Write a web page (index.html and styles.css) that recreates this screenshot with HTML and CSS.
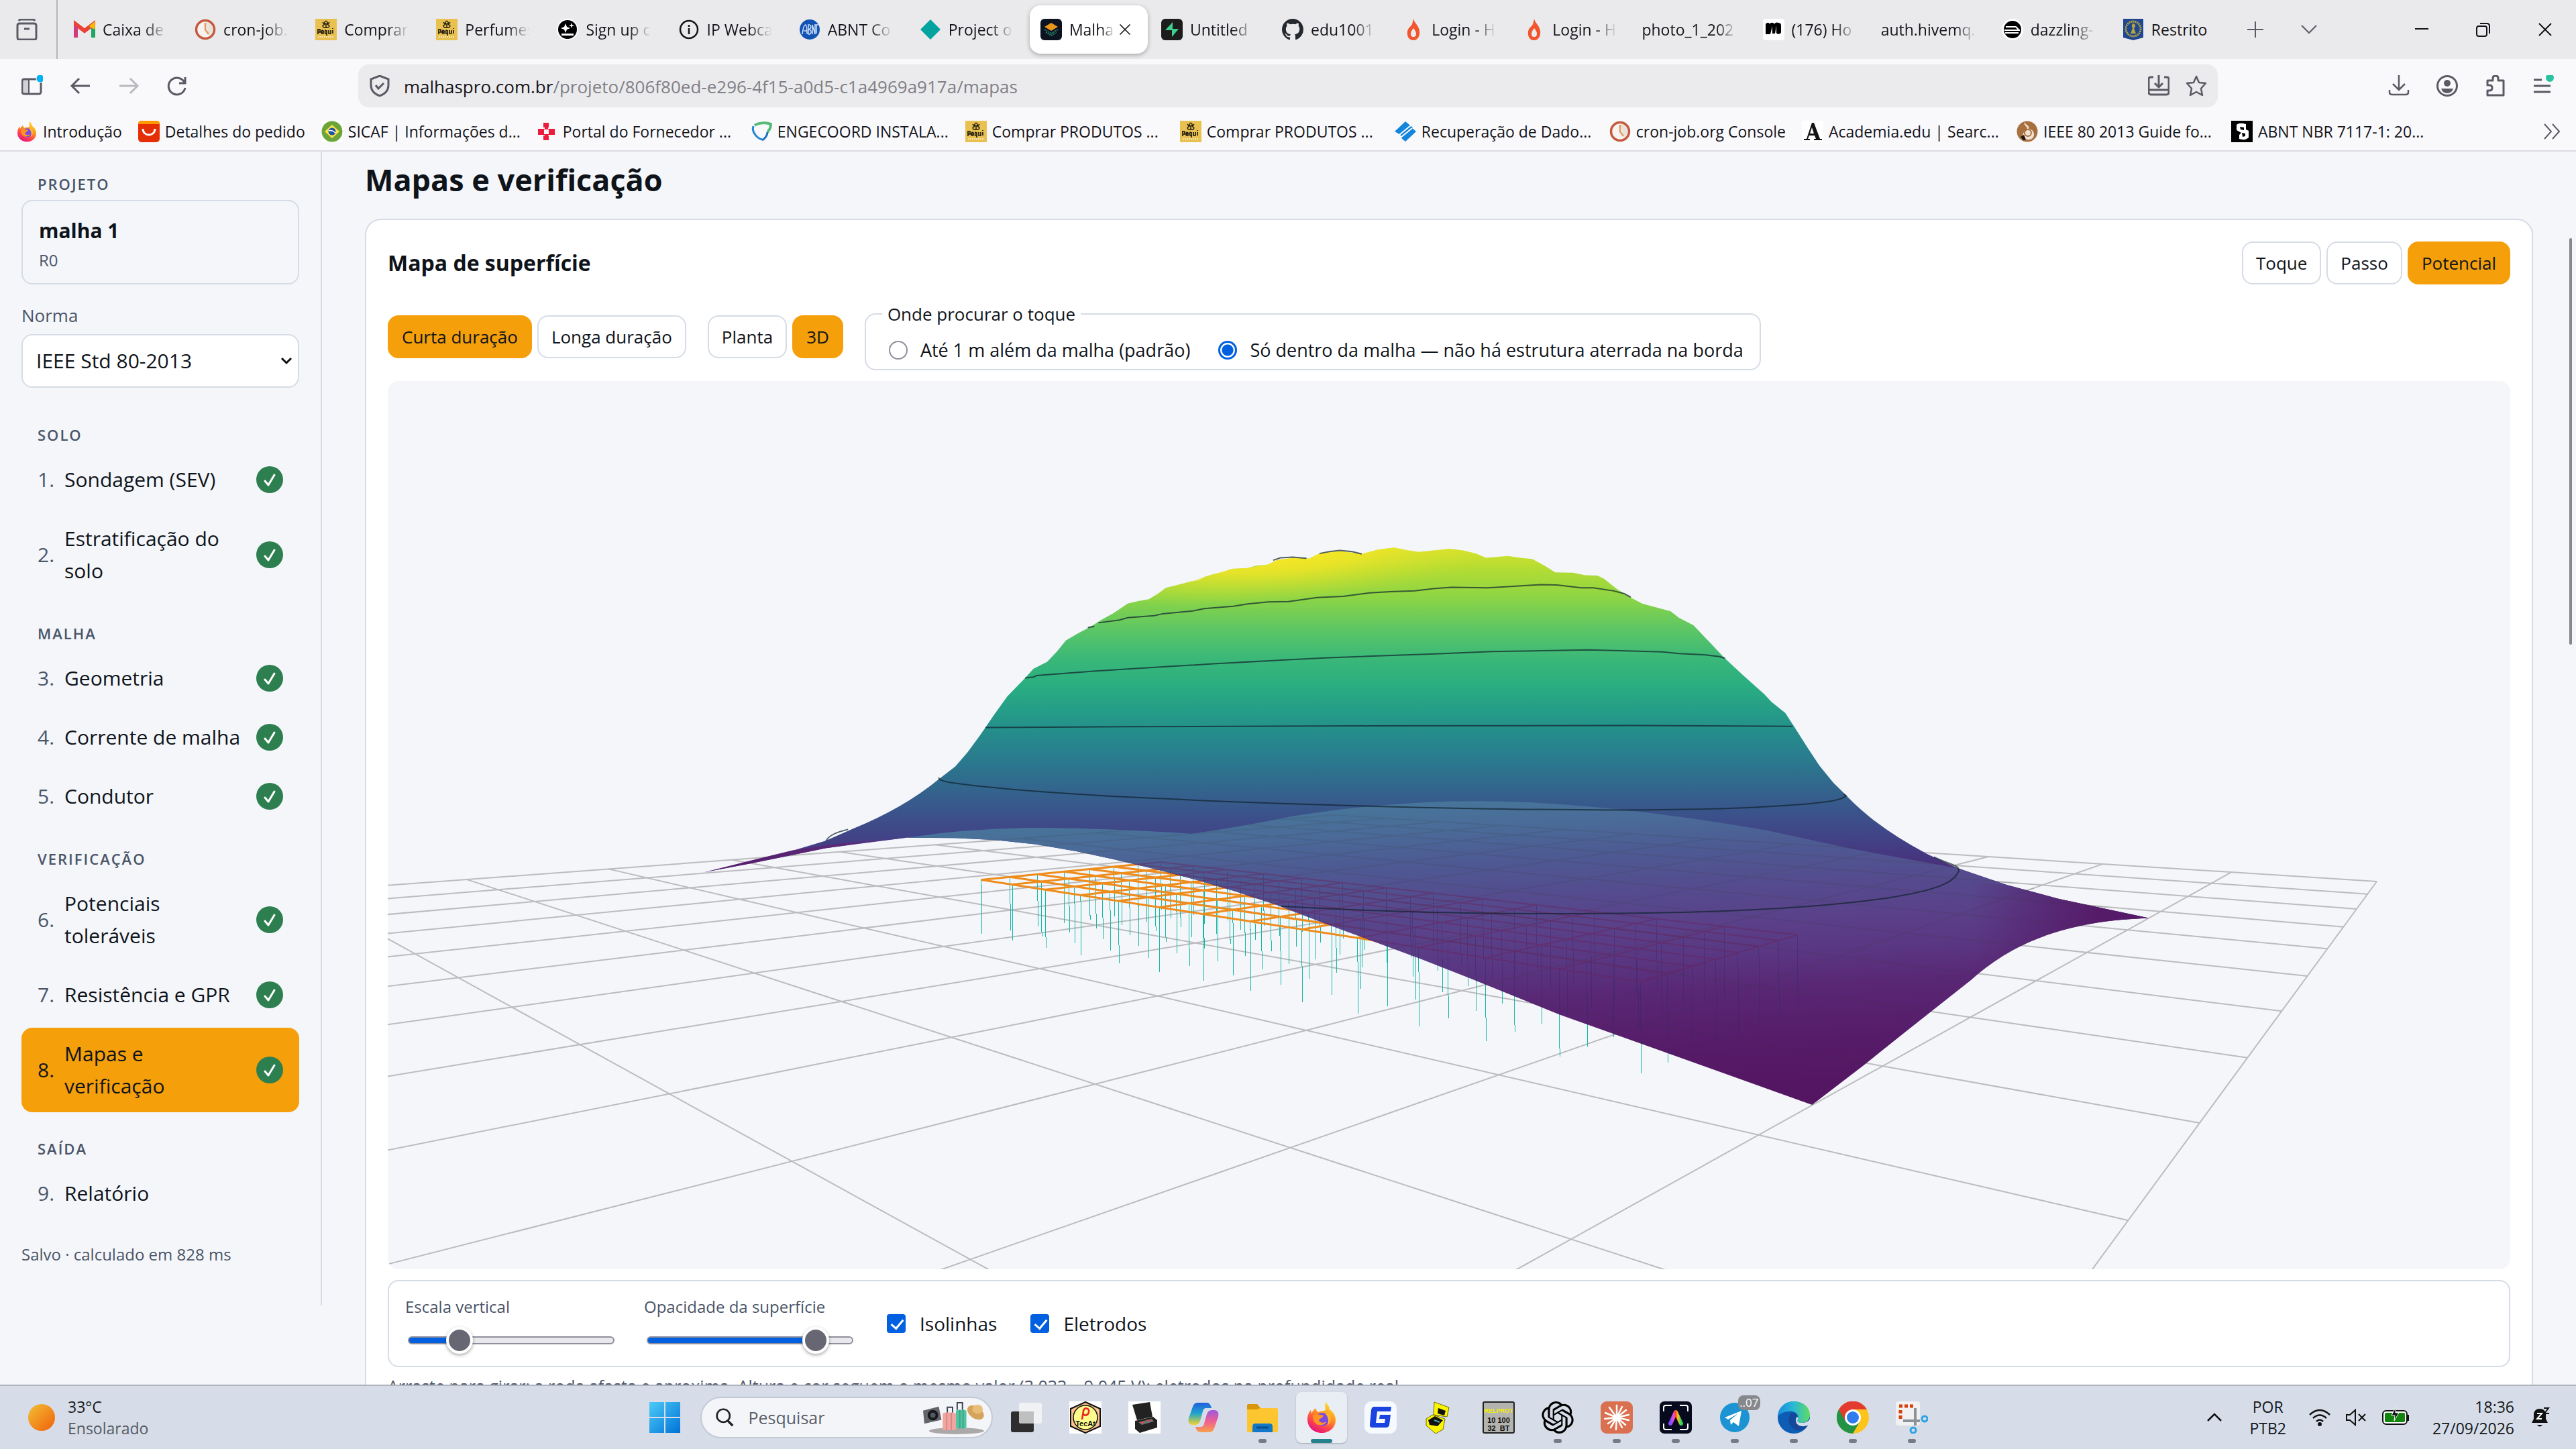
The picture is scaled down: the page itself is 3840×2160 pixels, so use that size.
FILE: index.html
```html
<!DOCTYPE html>
<html lang="pt-BR">
<head>
<meta charset="utf-8">
<title>Malhas Pro</title>
<link rel="stylesheet" href="styles.css">
</head>
<body>
<svg class="defs" aria-hidden="true">
  <symbol id="i-pequi" viewBox="0 0 32 32"><rect width="32" height="32" fill="#e9c150"/><path d="M16 3c-3 2-3 4 0 5 3-1 3-3 0-5M11 5l3 4M21 5l-3 4M13 9c-3 1-2 4 1 4h4c3 0 4-3 1-4M16 8v5" fill="none" stroke="#211c10" stroke-width="1.500"/><path d="M4 15v8M4 16h3v4H4M9 20c0-4 4-3 3 0H9c0 3 3 2 4 1M16 17c-2 0-2 5 0 5h1v-5 8M20 17v5h3v-5M26 17v5M26 14v1" fill="none" stroke="#211c10" stroke-width="1.700"/><path d="M4 27h24" stroke="#f7e7b4" stroke-width="2" stroke-dasharray="2 1"/></symbol>
  <symbol id="i-clock" viewBox="0 0 32 32"><circle cx="16" cy="16" r="13.500" fill="#f6f3f1" stroke="#c4593c" stroke-width="3.500"/><path d="M16 4a12 12 0 0 1 6 22z" fill="#e3d8cf" opacity=".6"/><path d="M16 6v10l5 7" fill="none" stroke="#e69a60" stroke-width="2.500"/></symbol>
  <symbol id="i-flame" viewBox="0 0 32 32"><path d="M16 0c1 6 8 10 9 18 1 8-3 14-9 14S6 27 7 19c1-6 5-7 7-11 1-3 1-5 2-8z" fill="#f2542d"/><path d="M16 14c2 3 4 5 4 8s-1 5-4 5-4-2-4-5 2-5 4-8z" fill="#eaeaec"/></symbol>
  <symbol id="i-firefox" viewBox="0 0 48 48"><defs><linearGradient id="ff1" x1=".8" y1="0" x2=".3" y2="1"><stop offset="0" stop-color="#ffe63a"/><stop offset=".4" stop-color="#ff9a1f"/><stop offset=".7" stop-color="#ff4a4a"/><stop offset="1" stop-color="#e3107f"/></linearGradient></defs><path d="M30 1c4 4 6 8 6 11 5 3 9 9 9 16 0 11-9 19-21 19S3 38 3 27c0-6 2-11 5-14l1 5c2-4 4-6 6-8 1 3 2 5 4 6 4-2 8-1 11-3-1-4-1-8 0-12z" fill="url(#ff1)"/><circle cx="25" cy="27" r="10" fill="#7a4be0"/><path d="M12 20c5-2 10 0 15 1-1 4-6 4-7 7 1 4 7 5 11 2-2 7-16 8-19-2-1-3-1-6 0-8z" fill="#ff9422"/><path d="M33 16c7 5 6 15 0 20 2-7 1-13-3-17z" fill="#ffb42a"/></symbol>
  <symbol id="i-close" viewBox="0 0 24 24"><path d="M3 3l18 18M21 3L3 21" fill="none" stroke="currentColor" stroke-width="2"/></symbol>
  <symbol id="i-ok" viewBox="0 0 40 40"><circle cx="20" cy="20" r="20" fill="#2d7f4f"/><path d="M13 22l5 6 9-15" fill="none" stroke="#fff" stroke-width="3" stroke-linecap="round" stroke-linejoin="round"/></symbol>
</svg>

<header class="browser">
  <div class="tabstrip">
    <button class="plain archive" aria-label="Visão geral"><svg class="ic" viewBox="0 0 32 32"><path d="M4 3q1-2 3-2h18q2 0 3 2M2 10q0-3 3-3h22q3 0 3 3v18q0 3-3 3H5q-3 0-3-3zM12 15h8" fill="none" stroke="currentColor" stroke-width="3"/></svg></button>
    <nav class="tabs">
      <button class="tab"><svg class="fav" viewBox="0 0 32 32"><path d="M3 27V8l13 10L29 8v19" fill="none" stroke="#ea4335" stroke-width="6"/><path d="M3 28V11" stroke="#d33a80" stroke-width="6"/><path d="M29 28V13" stroke="#22a463" stroke-width="6"/><path d="M24 12l6-5v8" fill="#fbbc04" stroke="#fbbc04" stroke-width="3"/></svg><span>Caixa de</span></button>
      <button class="tab"><svg class="fav"><use href="#i-clock"/></svg><span>cron-job.</span></button>
      <button class="tab"><svg class="fav"><use href="#i-pequi"/></svg><span>Comprar</span></button>
      <button class="tab"><svg class="fav"><use href="#i-pequi"/></svg><span>Perfumes</span></button>
      <button class="tab"><svg class="fav" viewBox="0 0 32 32"><circle cx="16" cy="16" r="15" fill="#000" stroke="#fff" stroke-width="2"/><path d="M13 7l2 5 5 2-5 2-2 5-2-5-5-2 5-2zM22 6l1 3 3 1-3 1-1 3-1-3-3-1 3-1zM7 22h18v3H7z" fill="#fff"/></svg><span>Sign up c</span></button>
      <button class="tab"><svg class="fav" viewBox="0 0 32 32"><circle cx="16" cy="16" r="13" fill="none" stroke="#15141a" stroke-width="2.500"/><path d="M16 14v9M16 9v3" stroke="#15141a" stroke-width="2.500"/></svg><span>IP Webca</span></button>
      <button class="tab"><svg class="fav" viewBox="0 0 32 32"><circle cx="16" cy="16" r="15" fill="#1253b3"/><path d="M5 23c1-9 3-14 5-14s2 9 2 14M7 18h5M14 23V9c5-1 5 6 0 7 6 0 5 8 0 7M20 23V9l4 14V9M23 9h6M26 9v13" fill="none" stroke="#cfe0f7" stroke-width="1.500"/></svg><span>ABNT Co</span></button>
      <button class="tab"><svg class="fav" viewBox="0 0 32 32"><path d="M16 1l15 15-15 15L1 16z" fill="#03a49f"/></svg><span>Project o</span></button>
      <button class="tab active"><svg class="fav" viewBox="0 0 32 32"><rect width="32" height="32" rx="6" fill="#0d1220"/><path d="M16 6l10 6-10 6-10-6z" fill="#e8961a"/><path d="M6 16l10 6 10-6M8 20l8 5 8-5" fill="none" stroke="#1f7a65" stroke-width="2" stroke-dasharray="2 1"/></svg><span>Malha</span><svg class="x"><use href="#i-close"/></svg></button>
      <button class="tab"><svg class="fav" viewBox="0 0 32 32"><rect width="32" height="32" rx="6" fill="#1c1c1c"/><path d="M17 5v10h9L16 27V17H6z" fill="#3ecf8e"/></svg><span>Untitled</span></button>
      <button class="tab"><svg class="fav" viewBox="0 0 16 16"><path fill="#24292f" d="M8 0C3.580 0 0 3.580 0 8c0 3.540 2.290 6.530 5.470 7.590.4.070.55-.17.55-.38 0-.19-.01-.82-.01-1.490-2.010.37-2.530-.49-2.690-.94-.09-.23-.48-.94-.82-1.130-.28-.15-.68-.52-.01-.53.63-.01 1.080.58 1.230.82.72 1.210 1.870.87 2.330.66.07-.52.28-.87.51-1.070-1.780-.2-3.640-.89-3.640-3.950 0-.87.31-1.590.82-2.150-.08-.2-.36-1.020.08-2.120 0 0 .67-.21 2.200.82a7.600 7.600 0 0 1 4 0c1.530-1.040 2.200-.82 2.200-.82.44 1.100.16 1.920.08 2.120.51.56.82 1.270.82 2.150 0 3.070-1.870 3.750-3.650 3.950.29.25.54.73.54 1.480 0 1.070-.01 1.930-.01 2.200 0 .21.15.46.55.38A8 8 0 0 0 16 8c0-4.420-3.580-8-8-8z"/></svg><span>edu1001</span></button>
      <button class="tab"><svg class="fav"><use href="#i-flame"/></svg><span>Login - H</span></button>
      <button class="tab"><svg class="fav"><use href="#i-flame"/></svg><span>Login - H</span></button>
      <button class="tab bare"><span>photo_1_202</span></button>
      <button class="tab"><svg class="fav" viewBox="0 0 32 32"><rect width="32" height="32" rx="4" fill="#fff"/><path d="M4 23V8c2-3 5-3 6 0 1-3 6-3 7 0 1-3 5-3 6-2 4 0 4 3 4 5v9c0 3-6 4-7 1V10l-2 12h-4V11l-3 12z" fill="#000"/></svg><span>(176) Ho</span></button>
      <button class="tab bare"><span>auth.hivemq.</span></button>
      <button class="tab"><svg class="fav" viewBox="0 0 32 32"><circle cx="16" cy="16" r="16" fill="#fff"/><circle cx="16" cy="16" r="13" fill="#000"/><path d="M6 12h15l4 4M4 17h23M5 21h20" fill="none" stroke="#fff" stroke-width="2"/></svg><span>dazzling-</span></button>
      <button class="tab"><svg class="fav" viewBox="0 0 32 32"><path d="M1 0h30v28L16 32 1 28z" fill="#1f4690"/><circle cx="16" cy="15" r="11" fill="none" stroke="#b9a53a" stroke-width="3" stroke-dasharray="2 1"/><path d="M16 7c4 1 4 5 1 7l3 8h-8l3-8c-2-3-1-6 1-7z" fill="#b9a53a"/></svg><span>Restrito</span></button>
    </nav>
    <button class="plain" aria-label="Nova aba"><svg class="ic s24" viewBox="0 0 24 24"><path d="M12 0v24M0 12h24" stroke="currentColor" stroke-width="2"/></svg></button>
    <button class="plain listtabs" aria-label="Listar abas"><svg class="ic s24" viewBox="0 0 24 24"><path d="M1 6l11 11L23 6" fill="none" stroke="currentColor" stroke-width="2"/></svg></button>
    <div class="winctl">
      <button class="plain dark" aria-label="Minimizar"><svg class="ic s24" viewBox="0 0 24 24"><path d="M2 11h20" stroke="currentColor" stroke-width="2"/></svg></button>
      <button class="plain dark" aria-label="Restaurar"><svg class="ic s24" viewBox="0 0 24 24"><rect x="2" y="7" width="15" height="15" rx="3" fill="none" stroke="currentColor" stroke-width="2"/><path d="M7 3h10q4 0 4 4v11" fill="none" stroke="currentColor" stroke-width="2"/></svg></button>
      <button class="plain dark" aria-label="Fechar"><svg class="ic s24"><use href="#i-close"/></svg></button>
    </div>
  </div>

  <div class="toolbar">
    <div class="navbtns">
      <button class="plain" aria-label="Barra lateral"><svg class="ic" viewBox="0 0 32 32"><rect x="1" y="6" width="28" height="22" rx="3" fill="none" stroke="currentColor" stroke-width="3"/><path d="M3 6h8v22H3z" fill="currentColor" opacity=".25"/><path d="M11 6v22" stroke="currentColor" stroke-width="2"/><circle cx="28" cy="5" r="6" fill="#00b3f4" stroke="#f9f9fb" stroke-width="1"/></svg></button>
      <button class="plain" aria-label="Voltar"><svg class="ic" viewBox="0 0 32 32"><path d="M30 16H4M14 5L3 16l11 11" fill="none" stroke="currentColor" stroke-width="3"/></svg></button>
      <button class="plain off" aria-label="Avançar"><svg class="ic" viewBox="0 0 32 32"><path d="M2 16h26M18 5l11 11-11 11" fill="none" stroke="currentColor" stroke-width="3"/></svg></button>
      <button class="plain" aria-label="Recarregar"><svg class="ic" viewBox="0 0 32 32"><path d="M27 11A12.500 12.500 0 1 0 28 19M28 3v9h-9" fill="none" stroke="currentColor" stroke-width="3"/></svg></button>
    </div>
    <div class="urlbar">
      <svg class="ic" viewBox="0 0 32 32"><path d="M16 1l13 5v9c0 8-5 13-13 16C8 28 3 23 3 15V6z" fill="none" stroke="currentColor" stroke-width="3"/><path d="M10 15l4 5 8-8" fill="none" stroke="currentColor" stroke-width="3"/></svg>
      <p class="url">malhaspro.com.br<span>/projeto/806f80ed-e296-4f15-a0d5-c1a4969a917a/mapas</span></p>
      <button class="plain" aria-label="Instalar"><svg class="ic" viewBox="0 0 32 32"><path d="M8 3H4q-3 0-3 3v19q0 4 3 4h24q3 0 3-4V6q0-3-3-3h-4M1 22h30M16 0v17M10 12l6 6 6-6" fill="none" stroke="currentColor" stroke-width="3"/></svg></button>
      <button class="plain" aria-label="Favoritar"><svg class="ic" viewBox="0 0 32 32"><path d="M16 2l4 9 10 1-7 8 2 10-9-5-9 5 2-10-7-8 10-1z" fill="none" stroke="currentColor" stroke-width="2.500" stroke-linejoin="round"/></svg></button>
    </div>
    <div class="tools">
      <button class="plain" aria-label="Downloads"><svg class="ic" viewBox="0 0 32 32"><path d="M16 0v21M7 13l9 9 9-9M2 22v4q0 3 4 3h20q4 0 4-3v-4" fill="none" stroke="currentColor" stroke-width="2.500"/></svg></button>
      <button class="plain" aria-label="Conta"><svg class="ic" viewBox="0 0 32 32"><circle cx="16" cy="16" r="14.500" fill="none" stroke="currentColor" stroke-width="3"/><circle cx="16" cy="12" r="5" fill="currentColor"/><path d="M7 20h18q-2 7-9 7t-9-7z" fill="currentColor"/></svg></button>
      <button class="plain" aria-label="Extensões"><svg class="ic" viewBox="0 0 32 32"><path d="M4 12V8h8V5q0-4 4-4t4 4v3h8v22H4v-7h3q4 0 4-4t-4-4H4z" fill="none" stroke="currentColor" stroke-width="3" stroke-linejoin="round"/></svg></button>
      <button class="plain" aria-label="Menu"><svg class="ic" viewBox="0 0 32 32"><path d="M1 7h12M1 16h25M1 25h25" stroke="currentColor" stroke-width="3"/><circle cx="25" cy="4" r="6" fill="#2ac3a2"/></svg></button>
    </div>
  </div>

  <nav class="bookmarks">
    <a href="#"><svg class="fav"><use href="#i-firefox"/></svg><span>Introdução</span></a>
    <a href="#"><svg class="fav" viewBox="0 0 32 32"><rect width="32" height="32" rx="5" fill="#e62e04"/><path d="M0 5q0-5 5-5h22q5 0 5 5H0z" fill="#ff9900"/><path d="M7 12c0 12 18 12 18 0" fill="none" stroke="#fff" stroke-width="3"/></svg><span>Detalhes do pedido</span></a>
    <a href="#" class="cut"><svg class="fav" viewBox="0 0 32 32"><rect width="32" height="32" fill="#fff"/><circle cx="16" cy="16" r="15.500" fill="#6ba539"/><path d="M16 6l11 10-11 10L5 16z" fill="#ffe14a"/><circle cx="16" cy="16" r="5.500" fill="#1b55a5"/><path d="M11 15q5-2 10 3" fill="none" stroke="#fff" stroke-width="1.500"/></svg><span>SICAF | Informações d...</span></a>
    <a href="#" class="cut"><svg class="fav" viewBox="0 0 32 32"><path d="M11 3h8v7h-8zM11 22h8v7h-8zM3 12h7v9H3zM21 12h7v9h-7z" fill="#ec1c3c"/><path d="M9 12h4v-3h5v3h4v9h-4v3h-5v-3H9z" fill="#ec1c3c"/><path d="M12 13h7v7h-7z" fill="#f9f9fb"/></svg><span>Portal do Fornecedor ...</span></a>
    <a href="#" class="cut"><svg class="fav" viewBox="0 0 32 32"><path d="M4 8c-3 8 5 18 13 20" fill="none" stroke="#2185d8" stroke-width="3"/><path d="M6 7c5-4 18-5 24-2 0 5-2 9-5 12" fill="none" stroke="#55bb78" stroke-width="4"/><path d="M25 17c0 5-4 10-8 12" fill="none" stroke="#1a72c4" stroke-width="3"/></svg><span>ENGECOORD INSTALA...</span></a>
    <a href="#" class="cut"><svg class="fav"><use href="#i-pequi"/></svg><span>Comprar PRODUTOS ...</span></a>
    <a href="#" class="cut"><svg class="fav"><use href="#i-pequi"/></svg><span>Comprar PRODUTOS ...</span></a>
    <a href="#" class="cut"><svg class="fav" viewBox="0 0 32 32"><path d="M0 16L16 1l6 5L7 20zM9 25l16-15 7 6-16 15zM12 14l10-8 5 4-17 13-4-4z" fill="#1285dc"/><path d="M7 21l17-14M9 25l17-14" stroke="#f9f9fb" stroke-width="2"/></svg><span>Recuperação de Dado...</span></a>
    <a href="#"><svg class="fav"><use href="#i-clock"/></svg><span>cron-job.org Console</span></a>
    <a href="#" class="cut"><svg class="fav" viewBox="0 0 32 32"><rect width="32" height="32" fill="#fff"/><path d="M3 29h9v-2H9l2-5h8l2 5h-3v2h12v-2h-3L18 3h-3L7 27H3zM12 19l3-9 3 9z" fill="#141414"/></svg><span>Academia.edu | Searc...</span></a>
    <a href="#" class="cut"><svg class="fav" viewBox="0 0 32 32"><circle cx="16" cy="16" r="15.500" fill="#a8703f"/><path d="M12 2c2 5 8 5 6 10 6 1 8 4 8 9s-5 8-10 7-8-5-6-9c2-5 6-4 6-7 0-4-6-5-4-10z" fill="#efe1d2"/><circle cx="17" cy="18" r="5" fill="none" stroke="#a8703f" stroke-width="2"/><path d="M6 24l5-3 3 7-4 1z" fill="#201710"/></svg><span>IEEE 80 2013 Guide fo...</span></a>
    <a href="#" class="cut"><svg class="fav" viewBox="0 0 32 32"><rect width="32" height="32" fill="#000"/><path d="M8 6q4-4 14-1v8l4 2v10q-5 5-14 2v-6l3-3-7-4z" fill="#fff"/><path d="M13 9l6 1v4l-5-1zM16 18l5 1v4l-4 1z" fill="#000"/></svg><span>ABNT NBR 7117-1: 20...</span></a>
    <button class="plain more" aria-label="Mais favoritos"><svg class="ic s24" viewBox="0 0 24 24"><path d="M1 1l10 11L1 23M13 1l10 11-10 11" fill="none" stroke="currentColor" stroke-width="2"/></svg></button>
  </nav>
</header>

<div class="page">
  <aside class="sidebar">
    <h2 class="group first">Projeto</h2>
    <div class="project"><strong>malha 1</strong><span>R0</span></div>
    <label class="field" for="norma">Norma</label>
    <div class="select"><select id="norma"><option>IEEE Std 80-2013</option></select><svg viewBox="0 0 18 18"><path d="M2 5l7 7 7-7" fill="none" stroke="#111" stroke-width="3"/></svg></div>

    <h2 class="group after-field">Solo</h2>
    <a class="step" href="#"><i>1.</i><span>Sondagem (SEV)</span><svg><use href="#i-ok"/></svg></a>
    <a class="step" href="#"><i>2.</i><span>Estratificação do solo</span><svg><use href="#i-ok"/></svg></a>
    <h2 class="group">Malha</h2>
    <a class="step" href="#"><i>3.</i><span>Geometria</span><svg><use href="#i-ok"/></svg></a>
    <a class="step" href="#"><i>4.</i><span>Corrente de malha</span><svg><use href="#i-ok"/></svg></a>
    <a class="step" href="#"><i>5.</i><span>Condutor</span><svg><use href="#i-ok"/></svg></a>
    <h2 class="group">Verificação</h2>
    <a class="step" href="#"><i>6.</i><span>Potenciais toleráveis</span><svg><use href="#i-ok"/></svg></a>
    <a class="step" href="#"><i>7.</i><span>Resistência e GPR</span><svg><use href="#i-ok"/></svg></a>
    <a class="step current" href="#"><i>8.</i><span>Mapas e verificação</span><svg><use href="#i-ok"/></svg></a>
    <h2 class="group">Saída</h2>
    <a class="step" href="#"><i>9.</i><span>Relatório</span></a>
    <p class="saved">Salvo · calculado em 828 ms</p>
  </aside>

  <main class="main">
    <h1>Mapas e verificação</h1>
    <section class="card">
      <div class="cardhead">
        <h2>Mapa de superfície</h2>
        <div class="seg"><button class="btn">Toque</button><button class="btn">Passo</button><button class="btn on">Potencial</button></div>
      </div>
      <div class="options">
        <div class="seg"><button class="btn on">Curta duração</button><button class="btn">Longa duração</button></div>
        <div class="seg"><button class="btn">Planta</button><button class="btn on">3D</button></div>
        <fieldset>
          <legend>Onde procurar o toque</legend>
          <label><input type="radio" name="onde">Até 1 m além da malha (padrão)</label>
          <label><input type="radio" name="onde" checked>Só dentro da malha — não há estrutura aterrada na borda</label>
        </fieldset>
      </div>

      <svg class="scene" viewBox="578 568 3164 1324" role="img" aria-label="Potencial na superfície em 3D">
        <defs>
          <linearGradient id="back" gradientUnits="userSpaceOnUse" x1="0" y1="96" x2="0" y2="1000">
            <stop offset="0" stop-color="#d8e22b"/><stop offset=".06" stop-color="#b3dc33"/><stop offset=".14" stop-color="#8dd545"/><stop offset=".23" stop-color="#5cc665"/><stop offset=".31" stop-color="#3bb878"/><stop offset=".39" stop-color="#29ad81"/><stop offset=".47" stop-color="#259a88"/><stop offset=".53" stop-color="#258a8c"/><stop offset=".61" stop-color="#2b778e"/><stop offset=".68" stop-color="#33648d"/><stop offset=".75" stop-color="#3b528b"/><stop offset=".83" stop-color="#433f85"/><stop offset=".92" stop-color="#4b2a78"/><stop offset="1" stop-color="#4f1d6c"/>
          </linearGradient>
          <radialGradient id="peak" gradientUnits="userSpaceOnUse" cx="0" cy="0" r="1" gradientTransform="matrix(290 -50 10 125 750 108)">
            <stop offset="0" stop-color="#fde725"/><stop offset=".4" stop-color="#f1e526" stop-opacity=".8"/><stop offset="1" stop-color="#d0e030" stop-opacity="0"/>
          </radialGradient>
          <linearGradient id="front" gradientUnits="userSpaceOnUse" x1="900" y1="740" x2="980" y2="1500">
            <stop offset="0" stop-color="#47769a"/><stop offset=".1" stop-color="#4a6b98"/><stop offset=".2" stop-color="#4d5b93"/><stop offset=".33" stop-color="#544c8e"/><stop offset=".45" stop-color="#5a4189"/><stop offset=".56" stop-color="#5a3782"/><stop offset=".68" stop-color="#592774"/><stop offset=".85" stop-color="#561c69"/><stop offset="1" stop-color="#541662"/>
          </linearGradient>
          <linearGradient id="tip" gradientUnits="userSpaceOnUse" x1="1600" y1="0" x2="1760" y2="0"><stop offset="0" stop-color="#551a68" stop-opacity="0"/><stop offset="1" stop-color="#551a68"/></linearGradient>
          <linearGradient id="wing" gradientUnits="userSpaceOnUse" x1="41" y1="0" x2="300" y2="0"><stop offset="0" stop-color="#551a68"/><stop offset=".7" stop-color="#5c2a7a"/><stop offset="1" stop-color="#4c4a8c"/></linearGradient>
          <clipPath id="frontclip"><path transform="matrix(1.2117 0 0 .5867 1000 760)" d="M290 833Q370 808 450 808 540 809 640 823 700 806 760 780 880 740 990 740 1140 740 1350 815L1584 911 1818 1037C1700 1045 1640 1120 1600 1194L1404 1512 1094 1283 983 1190 849 1085 745 1004 650 942 545 888 450 850z"/></clipPath>
        </defs>
        <g id="ground"></g>
        <g id="mesh" class="mesh"></g>
        <g transform="matrix(1.2117 0 0 .5867 1000 760)">
          <path fill="url(#back)" d="M41 921L100 893 150 866 190 841 222 812Q285 760 330 684L350 652 365 616 380 574 387 553 398 520 414 474 436 427 446 404 463 386 475 360 486 332 500 315 517 296 530 279 545 262 562 238 575 232 588 227 600 212 609 198 625 190 640 182 650 179 657 170 668 163 680 159 690 150 710 148 720 142 735 139 745 128 765 122 785 124 798 111 823 105 850 112 870 101 890 96 905 103 920 107 945 102 958 99 975 103 990 111 1003 122 1030 117 1045 122 1060 125 1075 142 1088 159 1110 160 1125 166 1140 167 1148 175 1163 200 1180 222 1195 238 1230 258 1240 274 1258 293 1275 330 1296 376 1320 422 1345 468 1354 488 1371 516 1382 551 1398 603 1413 650 1430 693 1447 728Q1485 810 1549 878L1584 911 1644 953 1707 988 1818 1037 1720 1050 1400 1100 849 1060 650 942 600 915 545 888 500 868 450 850 400 839 350 834 290 833 190 860 100 898z"/>
          <path fill="url(#peak)" d="M486 332L517 296 562 238 588 227 609 198 640 182 657 170 690 150 710 148 735 139 745 128 765 122 785 124 798 111 823 105 850 112 870 101 890 96 920 107 958 99 990 111 1003 122 1030 117 1060 125 1088 159 1148 175 1180 222V350H486z"/>
          <path fill="url(#wing)" d="M41 921L100 890 150 865 200 850 250 839 290 833 350 834 290 833 240 845 190 860 100 898z"/>
          <path fill="url(#front)" d="M290 833Q370 808 450 808 540 809 640 823 700 806 760 780 880 740 990 740 1140 740 1350 815L1450 860 1584 911 1644 953 1707 988 1818 1037C1700 1045 1640 1120 1600 1194L1524 1318 1467 1412 1404 1512 1227 1381 1094 1283 983 1190 921 1140 849 1085 803 1050 745 1004 690 967 650 942 600 915 545 888 500 868 450 850 400 839 350 834z"/>
          <path fill="url(#tip)" d="M1584 940L1644 953 1707 988 1818 1037C1700 1045 1640 1120 1600 1194z"/>
        </g>
        <g clip-path="url(#frontclip)" opacity=".12"><use href="#ground" class="under"/></g>
        <g clip-path="url(#frontclip)" opacity=".4"><g id="buried" class="buried"></g></g>
        <g class="iso" transform="matrix(1.2117 0 0 .5867 1000 760)">
          <path d="M741 128L750 122 765 120 782 123M798 111L810 106 823 103 838 106 850 112"/>
          <path d="M513 299L521 296M526 287L552 280 562 274 595 269 605 264 642 257 656 251 692 245 710 239 735 234 760 233 795 223 827 220 860 211 885 208 915 206 940 200 960 197 1005 198 1040 194 1070 190 1090 191 1120 198 1135 198 1160 206 1173 213 1181 222"/>
          <path d="M436 427L446 425 450 421 520 410Q700 386 820 375L940 366 1010 360 1130 356 1220 361 1240 365 1270 368 1290 373 1297 377"/>
          <path d="M387 553L560 551 860 549 1180 548 1380 550"/>
          <path d="M330 680Q328 687 344 693C450 725 700 745 900 755S1250 765 1340 755 1440 737 1446 727L1443 722"/>
          <path d="M751 1007Q900 1025 1080 1026C1300 1027 1430 1007 1500 985S1580 938 1584 920 1570 900 1554 882M191 841Q195 823 218 812"/>
        </g>
      </svg>

      <div class="controls">
        <label class="slider">Escala vertical<input type="range" min="0" max="100" value="21" style="--v:21%"></label>
        <label class="slider">Opacidade da superfície<input type="range" min="0" max="100" value="87" style="--v:87%"></label>
        <label class="check"><input type="checkbox" checked>Isolinhas</label>
        <label class="check"><input type="checkbox" checked>Eletrodos</label>
      </div>
      <p class="hint">Arraste para girar; a roda afasta e aproxima. Altura e cor seguem o mesmo valor (3.033 – 9.045 V); eletrodos na profundidade real.</p>
    </section>
  </main>
  <div class="scrollthumb"></div>
</div>

<footer class="taskbar">
  <div class="weather">
    <svg viewBox="0 0 40 40"><defs><linearGradient id="sun" x1="0" y1="0" x2="1" y2="1"><stop offset="0" stop-color="#f2c035"/><stop offset="1" stop-color="#f0600a"/></linearGradient></defs><circle cx="20" cy="20" r="20" fill="url(#sun)"/></svg>
    <p>33°C<span>Ensolarado</span></p>
  </div>
  <div class="apps">
    <button class="app start" aria-label="Iniciar"><svg viewBox="0 0 48 48"><defs><linearGradient id="win" x1="0" y1="0" x2="1" y2="1"><stop offset="0" stop-color="#4ccbf8"/><stop offset="1" stop-color="#0072d6"/></linearGradient></defs><path d="M1 1h22v22H1zM25 1h22v22H25zM1 25h22v22H1zM25 25h22v22H25z" fill="url(#win)"/></svg></button>
    <label class="search">
      <svg class="lens" viewBox="0 0 32 32"><circle cx="14" cy="13" r="11" fill="none" stroke="#222" stroke-width="3"/><path d="M21 21l9 9" stroke="#222" stroke-width="4"/></svg>
      <input type="text" placeholder="Pesquisar" aria-label="Pesquisar">
      <svg class="trip" viewBox="0 0 96 50"><ellipse cx="53" cy="45" rx="42" ry="5" fill="#aaa8a8"/><path d="M2 14l24-6 4 20-26 6z" fill="#63656a"/><circle cx="17" cy="21" r="8" fill="#17181c"/><circle cx="17" cy="21" r="4" fill="#525866"/><path d="M39 17V9h8v8M54 13V2h8v11" fill="none" stroke="#3d4250" stroke-width="2"/><rect x="32" y="17" width="20" height="27" rx="3" fill="#f1a4a0"/><rect x="52" y="13" width="16" height="28" rx="3" fill="#52c4a3"/><path d="M38 17v27M45 17v27" stroke="#d98985" stroke-width="2"/><path d="M58 13v28M63 13v28" stroke="#3da486" stroke-width="2"/><ellipse cx="82" cy="17" rx="14" ry="9" fill="#d5a35c" transform="rotate(35 82 17)"/><ellipse cx="85" cy="12" rx="8" ry="7" fill="#e8bd79"/></svg>
    </label>
    <button class="app" aria-label="Visão de tarefas"><svg viewBox="0 0 48 48"><rect x="1" y="15" width="34" height="31" rx="3" fill="#2e2e2e"/><rect x="13" y="2" width="34" height="31" rx="3" fill="#f4f4f4" opacity=".9"/><path d="M13 15h22v18H16q-3 0-3-3z" fill="#bfbfbf"/></svg></button>
    <button class="app" aria-label="TecAt"><svg viewBox="0 0 48 48"><rect width="48" height="48" fill="#fff"/><path d="M24 1l22 10v26L24 47 2 37V11z" fill="#fbc38e" stroke="#111" stroke-width="2"/><circle cx="24" cy="24" r="18" fill="#fdfb8c" stroke="#111" stroke-width="1.500"/><path d="M19 27l2-13c2-6 9-4 8 2-1 5-6 6-8 3" fill="none" stroke="#f02020" stroke-width="2.500"/><text x="24" y="37" text-anchor="middle" class="tiny">TecAt</text></svg></button>
    <button class="app" aria-label="Terrômetro"><svg viewBox="0 0 48 48"><rect width="48" height="48" fill="#fff"/><path d="M6 5l26-4 4 22-23 5zM10 29l27-6 6 5v11l-26 8-7-6z" fill="#222"/><path d="M15 31l20-5 3 4-18 5z" fill="#6a7275"/><path d="M18 32l5-1M28 29l5-1" stroke="#e04b3c" stroke-width="2"/></svg></button>
    <button class="app" aria-label="Copilot"><svg viewBox="0 0 48 48"><defs><linearGradient id="cp1" x1="0" y1="0" x2="0" y2="1"><stop offset="0" stop-color="#1f5fe0"/><stop offset=".5" stop-color="#21a7c9"/><stop offset="1" stop-color="#f5d32c"/></linearGradient><linearGradient id="cp2" x1="0" y1="0" x2="0" y2="1"><stop offset="0" stop-color="#9d59dc"/><stop offset=".5" stop-color="#ee5f94"/><stop offset="1" stop-color="#f9a04a"/></linearGradient></defs><path d="M15 2h14q5 0 7 8h-8q-4 0-5 5l-4 14q-2 6-8 6H7Q0 34 2 25l6-17q2-6 7-6z" fill="url(#cp1)"/><path d="M33 46H19q-5 0-7-8h8q4 0 5-5l4-14q2-6 8-6h4q7 1 5 10l-6 17q-2 6-7 6z" fill="url(#cp2)"/></svg></button>
    <button class="app run" aria-label="Explorador"><svg viewBox="0 0 48 48"><path d="M1 6q0-2 3-2h12l5 6h24q2 0 2 3v31q0 2-3 2H4q-3 0-3-2z" fill="#fdc630"/><path d="M1 6q0-2 3-2h12l5 6-5 2H1z" fill="#d9960b"/><path d="M9 46V38q0-5 4-5h22q4 0 4 5v8z" fill="#1478c9"/><path d="M15 39h18" stroke="#0b4d8a" stroke-width="3"/></svg></button>
    <button class="app run focus" aria-label="Firefox"><svg><use href="#i-firefox"/></svg></button>
    <button class="app" aria-label="GstarCAD"><svg viewBox="0 0 48 48"><rect width="48" height="48" rx="10" fill="#f6faff"/><path d="M14 8h26l-1 7H19l-2 17h13l1-6h-9l1-6h16l-2 15q-1 4-5 4H12q-5 0-4-5l2-21q1-5 4-5z" fill="#1b43e0"/></svg></button>
    <button class="app" aria-label="Medição"><svg viewBox="0 0 48 48"><path d="M16 1l22 8-3 14-20-3zM4 26l10-6 18 6-3 16-11 6L4 36z" fill="#fbf500" stroke="#6c6a10" stroke-width="1"/><path d="M22 10l11 4-2 7-10-3zM7 28l10-6 12 6-8 9-12-2z" fill="#111"/><path d="M16 28l8 3" stroke="#4aa5a0" stroke-width="2"/></svg></button>
    <button class="app" aria-label="Relprot"><svg viewBox="0 0 48 48"><rect x="1" y="1" width="46" height="46" rx="2" fill="#b3b3b0" stroke="#222" stroke-width="2"/><text x="24" y="17" text-anchor="middle" class="tiny yellow">RELPROT</text><text x="24" y="32" text-anchor="middle" class="tiny">10 100</text><text x="24" y="44" text-anchor="middle" class="tiny">32&#160; BT</text></svg></button>
    <button class="app run" aria-label="ChatGPT"><svg viewBox="0 0 24 24"><path d="M22.2819 9.8211a5.9847 5.9847 0 0 0-.5157-4.9108 6.0462 6.0462 0 0 0-6.5098-2.9A6.0651 6.0651 0 0 0 4.9807 4.1818a5.9847 5.9847 0 0 0-3.9977 2.9 6.0462 6.0462 0 0 0 .7427 7.0966 5.98 5.98 0 0 0 .511 4.9107 6.051 6.051 0 0 0 6.5146 2.9001A5.9847 5.9847 0 0 0 13.2599 24a6.0557 6.0557 0 0 0 5.7718-4.2058 5.9894 5.9894 0 0 0 3.9977-2.9001 6.0557 6.0557 0 0 0-.7475-7.0729zm-9.022 12.6081a4.4755 4.4755 0 0 1-2.8764-1.0408l.1419-.0804 4.7783-2.7582a.7948.7948 0 0 0 .3927-.6813v-6.7369l2.02 1.1686a.071.071 0 0 1 .038.052v5.5826a4.504 4.504 0 0 1-4.4945 4.4944zm-9.6607-4.1254a4.4708 4.4708 0 0 1-.5346-3.0137l.142.0852 4.783 2.7582a.7712.7712 0 0 0 .7806 0l5.8428-3.3685v2.3324a.0804.0804 0 0 1-.0332.0615L9.74 19.9502a4.4992 4.4992 0 0 1-6.1408-1.6464zM2.3408 7.8956a4.485 4.485 0 0 1 2.3655-1.9728V11.6a.7664.7664 0 0 0 .3879.6765l5.8144 3.3543-2.0201 1.1685a.0757.0757 0 0 1-.071 0l-4.8303-2.7865A4.504 4.504 0 0 1 2.3408 7.8956zm16.5963 3.8558L13.1038 8.364 15.1192 7.2a.0757.0757 0 0 1 .071 0l4.8303 2.7913a4.4944 4.4944 0 0 1-.6765 8.1042v-5.6772a.79.79 0 0 0-.407-.667zm2.0107-3.0231l-.142-.0852-4.7735-2.7818a.7759.7759 0 0 0-.7854 0L9.409 9.2297V6.8974a.0662.0662 0 0 1 .0284-.0615l4.8303-2.7866a4.4992 4.4992 0 0 1 6.6802 4.66zM8.3065 12.863l-2.02-1.1638a.0804.0804 0 0 1-.038-.0567V6.0742a4.4992 4.4992 0 0 1 7.3757-3.4537l-.142.0805L8.704 5.459a.7948.7948 0 0 0-.3927.6813zm1.0976-2.3654l2.602-1.4998 2.6069 1.4998v2.9994l-2.5974 1.4997-2.6067-1.4997Z" fill="#000"/></svg></button>
    <button class="app run" aria-label="Claude"><svg viewBox="0 0 48 48"><rect width="48" height="48" rx="9" fill="#db7050"/><path d="M24 24V6M24 24l8-16M24 24l14-11M24 24l18-4M24 24l18 4M24 24l13 11M24 24l8 15M24 24l-1 18M24 24l-9 15M24 24l-13 9M24 24L6 26M24 24L7 17M24 24L13 9" stroke="#fff" stroke-width="2.500" stroke-linecap="round"/></svg></button>
    <button class="app run" aria-label="Scanner"><svg viewBox="0 0 48 48"><defs><linearGradient id="rain"><stop offset="0" stop-color="#7a4bff"/><stop offset=".3" stop-color="#f04adf"/><stop offset=".5" stop-color="#ff4a20"/><stop offset=".7" stop-color="#ffc81f"/><stop offset="1" stop-color="#30d060"/></linearGradient></defs><rect width="48" height="48" rx="7" fill="#050a1c"/><path d="M6 15V9q0-3 3-3h9M30 6h9q3 0 3 3v6M42 33v6q0 3-3 3h-9M18 42H9q-3 0-3-3v-6" fill="none" stroke="#fff" stroke-width="2"/><path d="M16 33l8-17 8 17" fill="none" stroke="url(#rain)" stroke-width="6" stroke-linecap="round" stroke-linejoin="round"/></svg></button>
    <button class="app run" aria-label="Telegram"><svg viewBox="0 0 48 48"><circle cx="24" cy="24" r="22" fill="#1c93d2"/><path d="M9 24l25-10-4 23-8-6-4 4-1-7 12-10-15 9z" fill="#fff"/></svg><em>..07</em></button>
    <button class="app run" aria-label="Edge"><svg viewBox="0 0 48 48"><defs><linearGradient id="ed" x1="0" x2="1"><stop offset="0" stop-color="#1a8de0"/><stop offset=".5" stop-color="#2ab8d4"/><stop offset="1" stop-color="#5fdc62"/></linearGradient></defs><circle cx="24" cy="24" r="24" fill="#0d5db5"/><path d="M0 22C1 9 11 0 24 0c14 0 24 9 24 20 0 8-6 12-12 12-5 0-8-2-6-5 2-5-1-11-9-12C11 14 3 19 0 22z" fill="url(#ed)"/><path d="M20 17c-6 7-4 22 8 26 7 2 13-2 17-7-3 1-8 2-12 0-7-3-9-11-4-15-2-3-5-5-9-4z" fill="#15479a"/><path d="M30 27c-2 3 1 5 6 5 5 0 10-2 12-6v9l-4 1c-3 1-8 2-12 0-4-2-5-5-5-8 0-2 1-4 2-5 2 1 2 3 1 4z" fill="#d6dde8"/></svg></button>
    <button class="app run" aria-label="Chrome"><svg viewBox="0 0 48 48"><circle cx="24" cy="24" r="24" fill="#fdc51c"/><path d="M24 24h-11L3 12A24 24 0 0 0 24 48l10-17z" fill="#229345"/><path d="M24 12h21A24 24 0 0 0 3 12l10 18z" fill="#e33b2e"/><circle cx="24" cy="24" r="12" fill="#fff"/><circle cx="24" cy="24" r="9" fill="#2f7cee"/></svg></button>
    <button class="app run" aria-label="Captura"><svg viewBox="0 0 48 48"><rect width="36" height="36" rx="4" fill="#f1f1f1"/><path d="M5 7h21" stroke="#d8400d" stroke-width="5" stroke-dasharray="5 3"/><path d="M7 13v16" stroke="#d8400d" stroke-width="5" stroke-dasharray="5 3"/><path d="M11 29h25M29 10v26" stroke="#8a929a" stroke-width="4"/><circle cx="43" cy="26" r="4" fill="none" stroke="#2ca3e3" stroke-width="3"/><circle cx="26" cy="43" r="4" fill="none" stroke="#2ca3e3" stroke-width="3"/></svg></button>
  </div>
  <div class="tray">
    <svg class="chev" viewBox="0 0 24 24"><path d="M2 17L12 7l10 10" fill="none" stroke="#111" stroke-width="2.500"/></svg>
    <p class="lang">POR<br>PTB2</p>
    <svg viewBox="0 0 32 32"><path d="M1 12q15-14 30 0M6 17q10-9 20 0M11 22q5-5 10 0" fill="none" stroke="#111" stroke-width="2.500"/><circle cx="16" cy="26" r="3" fill="#111"/></svg>
    <svg viewBox="0 0 32 32"><path d="M2 12h5l8-7v22l-8-7H2zM20 11l10 10M30 11L20 21" fill="none" stroke="#111" stroke-width="2"/></svg>
    <svg class="bat" viewBox="0 0 40 32"><rect x="1" y="6" width="36" height="20" rx="5" fill="#fff" stroke="#111" stroke-width="2"/><rect x="4" y="9" width="30" height="14" rx="2" fill="#12850f"/><path d="M39 12v9" stroke="#111" stroke-width="2"/><path d="M20 1l-6 12h5l-1 8 7-12h-5z" fill="#111" stroke="#fff" stroke-width="1"/></svg>
    <p class="time">18:36<br>27/09/2026</p>
    <svg viewBox="0 0 32 32"><path d="M4 24l3-6v-7q1-8 9-8t9 8v7l3 6zM12 27h8q-4 5-8 0z" fill="#111"/><path d="M12 10h7l-7 8h7" fill="none" stroke="#fff" stroke-width="2"/><path d="M22 2h7l-6 8h7" fill="none" stroke="#111" stroke-width="2"/></svg>
  </div>
</footer>
<script src="scene.js"></script>
</body>
</html>
```
FILE: styles.css
```css
* { box-sizing: border-box; }
body {
  margin: 0;
  height: 100vh;
  display: flex;
  flex-direction: column;
  overflow: hidden;
  background: #f4f6fa;
  color: #0f141a;
  font: 30px/48px "Open Sans", "Noto Sans", sans-serif;
}
h1, h2, p { margin: 0; }
a { color: inherit; text-decoration: none; }
button, input, select { font: inherit; color: inherit; }
svg { display: block; flex: none; }
.defs { position: absolute; width: 0; height: 0; }

/* Browser chrome */
.browser { flex: none; background: #f9f9fb; border-bottom: 2px solid #dcdce2; font-size: 23px; line-height: 32px; color: #15141a; }
.plain { border: 0; background: none; padding: 0; color: #5b5b66; display: block; }
.plain.off { color: #b9b9c0; }
.plain.dark { color: #15141a; }
.ic, .fav { width: 32px; height: 32px; }
.ic.s24 { width: 24px; height: 24px; }
.tabstrip { display: flex; align-items: center; height: 88px; background: #eaeaec; }
.archive { padding: 28px 28px 28px 24px; border-right: 2px solid #b4b4ba; }
.tabs { flex: 1; display: flex; padding-left: 8px; min-width: 0; }
.tab { flex: 1 1 0; min-width: 0; height: 72px; margin: 0 4px 0 0; padding: 0 12px 0 16px; border: 0; border-radius: 16px; background: none; display: flex; align-items: center; gap: 11px; text-align: left; }
.tab span { flex: 1; min-width: 0; overflow: hidden; white-space: nowrap; -webkit-mask-image: linear-gradient(90deg, #000 60%, transparent 92%); mask-image: linear-gradient(90deg, #000 60%, transparent 92%); }
.tab.bare span { -webkit-mask-image: linear-gradient(90deg, #000 75%, transparent 96%); mask-image: linear-gradient(90deg, #000 75%, transparent 96%); }
.tab:last-child span { -webkit-mask-image: none; mask-image: none; }
.tab.active { background: #fff; box-shadow: 0 2px 6px rgba(0, 0, 0, .3); }
.tab.active span { -webkit-mask-image: linear-gradient(90deg, #000 70%, transparent); mask-image: linear-gradient(90deg, #000 70%, transparent); }
.tab .x { width: 20px; height: 20px; margin: 0 12px 0 -6px; }
.tab.bare { padding-left: 12px; }
.listtabs { margin: 0 144px 0 56px; }
.tabs + .plain { margin-left: 22px; }
.winctl { display: flex; gap: 68px; padding-right: 34px; }
.toolbar { display: flex; align-items: center; height: 80px; }
.navbtns { display: flex; gap: 40px; padding: 0 254px 0 32px; }
.urlbar { flex: 1; display: flex; align-items: center; gap: 24px; height: 64px; padding: 0 16px; border-radius: 16px; background: #ebebed; color: #5b5b66; }
.url { flex: 1; font-size: 26px; color: #15141a; margin-left: -4px; padding-top: 2px; }
.url span { color: #808086; }
.tools { display: flex; gap: 40px; padding: 0 32px 0 254px; }
.bookmarks { display: flex; align-items: center; gap: 24px; height: 56px; padding: 0 24px; }
.bookmarks a { display: flex; align-items: center; gap: 8px; white-space: nowrap; }
.bookmarks .cut { width: 296px; }
.more { margin-left: auto; }

/* Sidebar */
.page { flex: 1; min-height: 0; overflow: hidden; display: flex; align-items: flex-start; position: relative; }
.sidebar { width: 480px; flex: none; padding: 32px 32px 56px; border-right: 2px solid #d6dce5; }
.group { margin: 38px 0 12px; padding-left: 24px; font-size: 22px; line-height: 32px; font-weight: 600; letter-spacing: 2px; text-transform: uppercase; color: #4a5568; }
.group.first { margin: 0 0 8px; }
.group.after-field { margin-top: 54px; }
.project { border: 2px solid #d6dce5; border-radius: 16px; padding: 22px 24px 12px; margin-bottom: 26px; }
.project strong, .project span { display: block; line-height: 44px; }
.project span, .saved { font-size: 24px; color: #4a5568; }
.field { display: block; font-size: 26px; line-height: 40px; color: #4a5568; }
.select { position: relative; margin-top: 8px; }
.select select { display: block; appearance: none; width: 100%; height: 80px; padding: 0 20px; border: 2px solid #d6dce5; border-radius: 16px; background: #fff; }
.select svg { position: absolute; right: 10px; top: 31px; width: 18px; height: 18px; }
.step { display: flex; align-items: center; padding: 15px 24px; border-radius: 16px; margin-bottom: 10px; }
.step i { font-style: normal; width: 40px; flex: none; color: #4a5568; }
.step span { flex: 1; }
.step svg { width: 40px; height: 40px; margin-left: 20px; }
.step.current { background: #f59f0b; }
.step.current i { color: #0f141a; }
.saved { margin-top: 32px; line-height: 40px; }

/* Main card */
.main { flex: 1; min-width: 0; padding: 14px 64px 0; }
h1 { font-size: 45px; line-height: 56px; margin-bottom: 30px; }
.card { background: #fff; border: 2px solid #d6dce5; border-radius: 24px; padding: 32px; }
.cardhead { display: flex; justify-content: space-between; align-items: center; }
.card h2 { font-size: 32px; line-height: 48px; }
.seg { display: flex; gap: 8px; }
.btn { border: 2px solid #d6dce5; border-radius: 16px; background: #fff; padding: 12px 19px; font-size: 26px; line-height: 36px; }
.btn.on { background: #f59f0b; border-color: #f59f0b; }
.options { display: flex; align-items: center; gap: 32px; margin: 28px 0 16px; }
fieldset { margin: 0; padding: 20px 24px 10px 34px; border: 2px solid #d6dce5; border-radius: 16px; display: flex; gap: 42px; font-size: 27px; line-height: 36px; min-width: 0; }
legend { font-size: 26px; line-height: 32px; padding: 0 8px; margin-left: -10px; }
fieldset label, .check { display: flex; align-items: center; }
input[type=radio], input[type=checkbox] { appearance: none; flex: none; width: 28px; height: 28px; margin: 0 19px 0 0; }
input[type=radio] { border: 2px solid #8f8f9d; border-radius: 50%; background: #fff; }
input[type=radio]:checked { border: 3px solid #0060df; background: radial-gradient(#0060df 8px, #fff 9px); }
.scene { width: 100%; height: auto; border-radius: 16px; background: #f4f6fa; }
.scene line { fill: none; }
.ground { stroke: #bcbcbe; stroke-width: 2; }
.under { filter: brightness(.3); }
.wire { stroke: #ee8c1c; stroke-width: 3; }
.rod { stroke: #14b8a6; stroke-width: 1; shape-rendering: crispEdges; }
.buried .wire { stroke: #6b1f55; stroke-width: 2; }
.buried .rod { stroke: #2b2a68; }
.iso path { fill: none; stroke: #10222c; stroke-width: 2; stroke-opacity: .7; vector-effect: non-scaling-stroke; }
.controls { display: flex; align-items: center; gap: 44px; margin-top: 16px; padding: 20px 24px; border: 2px solid #d6dce5; border-radius: 16px; }
.slider { display: flex; flex-direction: column; gap: 14px; width: 312px; font-size: 24px; line-height: 36px; color: #4a5568; }
.slider input { appearance: none; width: 308px; height: 36px; margin: 0 4px; background: none; }
.slider input::-webkit-slider-runnable-track { height: 12px; border-radius: 6px; border: 2px solid #8f8f9d; background: linear-gradient(90deg, #0060df var(--v), #e9e9ed var(--v)); }
.slider input::-webkit-slider-thumb { appearance: none; width: 40px; height: 40px; margin-top: -16px; border: 4px solid #fff; border-radius: 50%; background: #676774; box-shadow: 0 2px 5px rgba(0, 0, 0, .35); }
.check { font-size: 28px; margin-left: 6px; }
.check input { position: relative; border-radius: 4px; background: #0060df; margin-right: 21px; }
.check input::before { content: ""; position: absolute; left: 10px; top: 4px; width: 8px; height: 15px; border: solid #fff; border-width: 0 3px 3px 0; transform: rotate(40deg); }
.hint { margin-top: 8px; font-size: 25px; line-height: 40px; color: #4a5568; }
.scrollthumb { position: absolute; right: 6px; top: 7%; width: 4px; height: 33%; border-radius: 2px; background: #85858a; }

/* Taskbar */
.taskbar { flex: none; display: grid; grid-template-columns: 1fr auto 1fr; align-items: center; height: 96px; border-top: 2px solid #aeb4bd; background: #d6dde8; font-size: 23px; line-height: 32px; color: #15181c; }
.weather { display: flex; align-items: center; gap: 19px; padding-left: 42px; }
.weather svg { width: 40px; height: 40px; }
.weather span { display: block; color: #555c66; }
.apps { display: flex; align-items: center; }
.app { position: relative; width: 76px; height: 76px; margin: 0 6px; border: 0; border-radius: 8px; background: none; padding: 0; display: grid; place-items: center; }
.app svg { width: 48px; height: 48px; }
.app.run::after { content: ""; position: absolute; left: 32px; bottom: 0; width: 12px; height: 6px; border-radius: 3px; background: #767c85; }
.app.focus { background: #e9edf4; box-shadow: 0 1px 2px rgba(0, 0, 0, .25); }
.app.focus::after { left: 22px; width: 32px; background: #26808e; }
.app em { position: absolute; right: 0; top: 5px; padding: 0 2px; border-radius: 8px; background: #86888b; color: #fff; font: 17px/22px "Open Sans", sans-serif; }
.tiny { font: bold 11px "Liberation Sans", sans-serif; fill: #111; }
.tiny.yellow { fill: #f4f000; font-size: 9px; }
.search { display: flex; align-items: center; width: 436px; height: 62px; margin: 0 6px 0 9px; padding: 0 10px 0 20px; border: 2px solid #c2cad6; border-radius: 31px; background: #f3f5f9; }
.lens { width: 28px; height: 30px; }
.search input { flex: 1; min-width: 0; border: 0; background: none; padding: 0 0 0 22px; font-size: 25px; }
.search input::placeholder { color: #5c6068; opacity: 1; }
.trip { width: 94px; height: 49px; }
.tray { display: flex; align-items: center; justify-content: flex-end; gap: 22px; padding-right: 38px; }
.tray svg { width: 32px; height: 32px; }
.tray .chev { width: 24px; height: 24px; margin-right: 18px; }
.tray .bat { width: 42px; }
.lang { text-align: center; margin-right: 12px; }
.time { text-align: right; margin-left: 12px; }
```
FILE: scene.js
```js
// Draws the ground grid and the electrode mesh in perspective.
const NS = "http://www.w3.org/2000/svg";

// Plane-to-screen projection from the terms of a homography.
function projector(a, b, c, d, e, f, g, h) {
  return (u, v) => {
    const w = g * u + h * v + 1;
    return { x: (a * u + b * v + c) / w, y: (d * u + e * v + f) / w, w };
  };
}

function segment(parent, cls, p, q) {
  const el = document.createElementNS(NS, "line");
  el.setAttribute("class", cls);
  el.setAttribute("x1", p.x.toFixed(1));
  el.setAttribute("y1", p.y.toFixed(1));
  el.setAttribute("x2", q.x.toFixed(1));
  el.setAttribute("y2", q.y.toFixed(1));
  parent.appendChild(el);
}

const groundLayer = document.getElementById("ground");
const ground = projector(0.87, -284.5, 3543, 71.2, -83.4, 1314, 0.0654, -0.0767);
for (let i = 0; i <= 12; i++) {
  segment(groundLayer, "ground", ground(i, 0), ground(i, 12));
  segment(groundLayer, "ground", ground(0, i), ground(12, i));
}

const COLS = 13, ROWS = 7, ROD = 81;
const mesh = projector(-17.6, 503.6, 1462.9, -446.6, 148.8, 1311.5, -0.409, 0.1364);

function drawMesh(layer) {
  for (let u = 0; u <= COLS; u++) {
    for (let v = 0; v <= ROWS; v++) {
      const p = mesh(u / COLS, v / ROWS);
      segment(layer, "rod", p, { x: p.x + 1, y: p.y + ROD / p.w });
    }
  }
  for (let u = 0; u <= COLS; u++) segment(layer, "wire", mesh(u / COLS, 0), mesh(u / COLS, 1));
  for (let v = 0; v <= ROWS; v++) segment(layer, "wire", mesh(0, v / ROWS), mesh(1, v / ROWS));
}
drawMesh(document.getElementById("mesh"));
// The part of the mesh seen through the translucent surface.
drawMesh(document.getElementById("buried"));
```
